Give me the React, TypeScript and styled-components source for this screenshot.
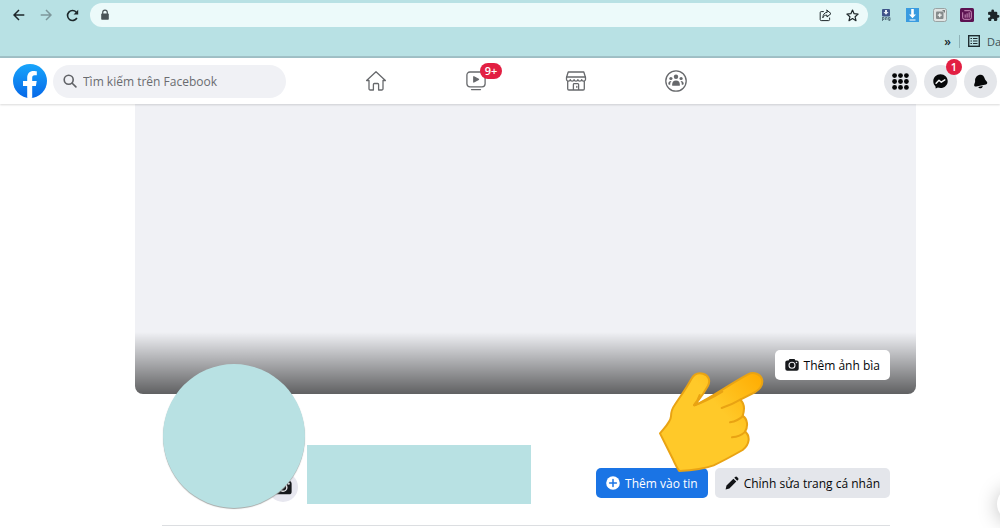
import React from "react";
import styled, { createGlobalStyle } from "styled-components";

const GlobalStyle = createGlobalStyle`
  *, *::before, *::after { box-sizing: border-box; }
  html, body { margin: 0; padding: 0; }
  body {
    background: #fff;
    color: #1b1d21;
    font-family: "Open Sans", "Noto Sans", sans-serif;
    font-size: 12px;
    overflow: hidden;
  }
  button { font: inherit; color: inherit; border: 0; padding: 0; background: none; cursor: pointer; }
  svg { display: block; flex: none; }
`;

const Page = styled.div`
  position: relative;
  min-height: 100vh;
  overflow: hidden;
`;

/* ---------- browser bar ---------- */

const BrowserBar = styled.div`
  background: #b8e1e4;
  border-bottom: 2px solid #a0c0c6;
  height: 58px;
`;

const AddressRow = styled.div`
  display: flex;
  align-items: center;
  padding: 3px 0 0 5px;
`;

const BarButton = styled.button<{ $dim?: boolean }>`
  width: 27px;
  height: 24px;
  flex: none;
  display: grid;
  place-items: center;
  color: ${(p) => (p.$dim ? "#7d979b" : "#1c2629")};
`;

const AddressBox = styled.div`
  flex: 1;
  min-width: 0;
  height: 24px;
  margin: 0 4px;
  padding: 0 2px 0 9px;
  display: flex;
  align-items: center;
  border-radius: 12px;
  background: #ecfafa;
  color: #4a5558;
`;

const AddressInput = styled.input`
  flex: 1;
  min-width: 0;
  border: 0;
  outline: 0;
  background: transparent;
  font: inherit;
`;

const Extensions = styled.div`
  display: flex;
  flex: none;
  width: 128px;
  overflow: hidden;
`;

const BookmarkRow = styled.div`
  display: flex;
  justify-content: flex-end;
  align-items: center;
  height: 28px;
  gap: 8px;
  color: #3f5155;
  font-size: 11px;
`;

const BarDivider = styled.span`
  width: 1px;
  height: 13px;
  background: #8fb3b8;
`;

const BookmarkFolder = styled.button`
  display: flex;
  align-items: center;
  gap: 7px;
  width: 32px;
  overflow: hidden;
  white-space: nowrap;
`;

const More = styled.button`
  color: #16252a;
  font-weight: 600;
  font-size: 12px;
`;

/* ---------- site header ---------- */

const Header = styled.header`
  position: relative;
  z-index: 1;
  display: grid;
  grid-template-columns: 326px minmax(0, 1fr) 274px;
  align-items: center;
  height: 46px;
  background: #fff;
  box-shadow: 0 1px 2px rgba(0, 0, 0, 0.15);
`;

const Brand = styled.div`
  display: flex;
  align-items: center;
  gap: 6px;
  padding: 0 40px 0 13px;
`;

const SearchBox = styled.label`
  flex: 1;
  min-width: 0;
  display: flex;
  align-items: center;
  gap: 6px;
  height: 33px;
  padding-left: 10px;
  border-radius: 17px;
  background: #f0f1f5;
  color: #606266;
`;

const SearchInput = styled.input`
  flex: 1;
  min-width: 0;
  border: 0;
  outline: 0;
  padding: 0;
  background: transparent;
  font: inherit;
  color: #606266;
  &::placeholder { color: #6a6c70; opacity: 1; }
`;

const Tabs = styled.nav`
  display: grid;
  grid-template-columns: repeat(4, 1fr);
`;

const Tab = styled.a`
  display: grid;
  place-items: center;
  height: 46px;
  color: #67696c;
`;

const Anchor = styled.span`
  position: relative;
  display: block;
`;

const Badge = styled.span<{ $wide?: boolean }>`
  position: absolute;
  top: ${(p) => (p.$wide ? "-7px" : "-6px")};
  right: ${(p) => (p.$wide ? "-16px" : "-5px")};
  width: ${(p) => (p.$wide ? "22px" : "16px")};
  height: 16px;
  border-radius: 8px;
  background: #e21f42;
  color: #fff;
  font-size: 11px;
  line-height: 16px;
  font-weight: 600;
  text-align: center;
`;

const Tools = styled.div`
  display: flex;
  justify-content: flex-end;
  gap: 7px;
  padding-right: 3px;
`;

const RoundButton = styled.button`
  position: relative;
  width: 33px;
  height: 33px;
  border-radius: 50%;
  display: grid;
  place-items: center;
  background: #e4e6ea;
  color: #060708;
`;

/* ---------- profile ---------- */

const Profile = styled.main`
  padding: 0 84px 0 135px;
`;

const Cover = styled.section`
  display: flex;
  align-items: flex-end;
  justify-content: flex-end;
  height: 290px;
  padding: 0 26px 14px;
  border-radius: 0 0 8px 8px;
  background: linear-gradient(to bottom, rgba(0, 0, 0, 0) 228px, rgba(0, 0, 0, 0.6) 290px), #f0f1f5;
`;

const ActionButton = styled.button<{ $tone: "white" | "blue" | "gray" }>`
  display: flex;
  align-items: center;
  justify-content: center;
  gap: 5px;
  height: 30px;
  padding: 0 10px;
  border-radius: 5px;
  font-weight: 500;
  white-space: nowrap;
  background: ${(p) => ({ white: "#fff", blue: "#1a74e5", gray: "#e4e6eb" })[p.$tone]};
  color: ${(p) => (p.$tone === "blue" ? "#fff" : "#050608")};
`;

const ProfileRow = styled.section`
  position: relative;
  display: flex;
  align-items: flex-end;
  height: 132px;
  margin: 0 26px 0 27px;
  border-bottom: 1px solid #dcdee1;
`;

const AvatarWrap = styled.div`
  position: relative;
  flex: none;
  margin: 0 2px 17px 1px;
`;

const Avatar = styled.div`
  position: relative;
  width: 142px;
  height: 144px;
  border-radius: 50%;
  background: #b8e1e3;
  box-shadow: 0 1px 1px #a5a9a8;
`;

const AvatarButton = styled.button`
  position: absolute;
  right: 7px;
  bottom: 6px;
  width: 30px;
  height: 30px;
  border-radius: 50%;
  display: grid;
  place-items: center;
  background: #e7e7ef;
`;

const NameBlock = styled.div`
  width: 224px;
  height: 59px;
  margin-bottom: 21px;
  background: #b8e1e3;
`;

const Actions = styled.div`
  display: flex;
  gap: 7px;
  margin: 0 0 27px auto;
`;

const Pointer = styled.svg`
  position: absolute;
  right: 125px;
  bottom: 52px;
  width: 107px;
  height: 102px;
  pointer-events: none;
`;

const ChatBubble = styled.button`
  position: absolute;
  right: -31px;
  top: 487px;
  width: 34px;
  height: 34px;
  border-radius: 50%;
  background: #fff;
  box-shadow: 0 2px 20px rgba(0, 0, 0, 0.25);
`;

/* ---------- drawings ---------- */

const line = { fill: "none", stroke: "currentColor", strokeLinecap: "round", strokeLinejoin: "round" } as const;

const ArrowIcon = ({ flip }: { flip?: boolean }) => (
  <svg width="12" height="12" viewBox="0 0 12 12" {...line} strokeWidth="1.5" strokeLinecap="butt" strokeLinejoin="miter">
    <path d={flip ? "M.7 6H11M6 1l5 5-5 5" : "M11.3 6H1M6 1L1 6l5 5"} />
  </svg>
);

const ReloadIcon = () => (
  <svg width="13" height="13" viewBox="0 0 13 13" {...line} strokeWidth="1.6" strokeLinecap="butt">
    <path d="M10.9 9A5 5 0 1 1 10.3 3.2" />
    <path d="M12.2.8v4.6H7.6z" fill="currentColor" stroke="none" />
  </svg>
);

const LockIcon = () => (
  <svg width="12" height="12" viewBox="0 0 12 12">
    <path d="M3.7 5V3.4a2.3 2.3 0 0 1 4.6 0V5" {...line} strokeWidth="1.2" />
    <rect x="2.2" y="4.6" width="7.6" height="6.2" rx=".8" fill="currentColor" />
  </svg>
);

const ShareIcon = () => (
  <svg width="13" height="13" viewBox="0 0 13 13" {...line} strokeWidth="1">
    <path d="M4.400 2.600H2.200a1 1 0 0 0-1 1v7a1 1 0 0 0 1 1h7.400a1 1 0 0 0 1-1V9" />
    <path d="M8 1.200l4 3.400-4 3.400V6.100C5.800 6.100 4.600 7 3.800 8.800 4 5.500 5.500 3.500 8 3.200z" />
  </svg>
);

const StarIcon = () => (
  <svg width="13" height="13" viewBox="0 0 13 13" {...line} strokeWidth="1.2">
    <path d="M6.5 1l1.6 3.7 4 .4-3 2.7.9 3.9-3.5-2.1L3 11.7l.9-3.9-3-2.7 4-.4z" />
  </svg>
);

const PngIcon = () => (
  <svg width="12" height="14" viewBox="0 0 12 14">
    <rect x="2" y="1" width="8" height="7.5" rx="1" fill="#3f548a" />
    <path d="M5 2h2v2h1.500L6 6.800 3.500 4H5z" fill="#e8eef8" />
    <path d="M2.500 9v4M2.500 9.500H4v2H2.500M5.500 12V9.500H7V12M8.500 9.500H10v3H8.500M8.500 9.500v2H10" fill="none" stroke="#54707c" strokeWidth=".9" />
  </svg>
);

const DownloadIcon = () => (
  <svg width="13" height="14" viewBox="0 0 13 14">
    <rect width="13" height="14" fill="#3a9be0" />
    <path d="M5.2 1h2.6v5.5H10L6.5 10.2 3 6.500h2.200zM3.500 11.500h6v1h-6z" fill="#fff" />
  </svg>
);

const CaptureIcon = () => (
  <svg width="14" height="14" viewBox="0 0 14 14">
    <rect x=".5" y=".5" width="13" height="13" rx="2" fill="#dfe3e2" stroke="#9aa3a3" />
    <rect x="3" y="3.500" width="7.500" height="7.500" rx="1" fill="#858b8b" />
    <path d="M6.750 5.200v4M4.750 7.200h4" stroke="#f3f5f4" strokeWidth="1.300" />
    <path d="M9 2h3v3z" fill="#777d7d" />
  </svg>
);

const ChartIcon = () => (
  <svg width="14" height="14" viewBox="0 0 13 13">
    <rect width="13" height="13" rx="1.500" fill="#5c1251" />
    <path d="M4 2.500h5a1.500 1.500 0 0 1 1.500 1.500v5A1.500 1.500 0 0 1 9 10.500H4A1.500 1.500 0 0 1 2.500 9V4M4.800 9V6M6.600 9V5M8.500 9V4" fill="none" stroke="#dfa6d0" strokeWidth=".8" />
  </svg>
);

const PuzzleIcon = () => (
  <svg width="13" height="13" viewBox="0 0 24 24" fill="currentColor">
    <path d="M20.500 11H19V7a2 2 0 0 0-2-2h-4V3.500a2.500 2.500 0 0 0-5 0V5H4a2 2 0 0 0-2 2v3.800h1.500a2.700 2.700 0 0 1 0 5.400H2V20a2 2 0 0 0 2 2h3.800v-1.500a2.700 2.700 0 0 1 5.400 0V22H17a2 2 0 0 0 2-2v-4h1.500a2.500 2.500 0 0 0 0-5z" />
  </svg>
);

const ListIcon = () => (
  <svg width="12" height="12" viewBox="0 0 12 12" fill="none" stroke="#1e2d31">
    <rect x=".7" y=".7" width="10.600" height="10.600" strokeWidth="1.400" />
    <path d="M2.500 3.500H4M5 3.500h4.500M2.500 6H4M5 6h4.500M2.500 8.500H4M5 8.500h4.500" />
  </svg>
);

const FacebookLogo = () => (
  <svg width="34" height="34" viewBox="0 0 34 34" role="img" aria-label="Facebook">
    <defs>
      <linearGradient id="brand" x1="0" y1="0" x2="0" y2="1">
        <stop offset="0" stopColor="#18a5fb" />
        <stop offset="1" stopColor="#0668e8" />
      </linearGradient>
    </defs>
    <circle cx="17" cy="17" r="17" fill="url(#brand)" />
    <path d="M14.200 33.800V21.900H10v-4.800h4.200v-3.300c0-4.500 2.400-6.900 6.400-6.900 1.600 0 3.200.3 3.200.3v4.100h-2.100c-2 0-2.500 1.200-2.500 2.500v3.300h4.500l-.8 4.800h-3.700v11.900a17 17 0 0 1-5 0z" fill="#fff" />
  </svg>
);

const SearchIcon = () => (
  <svg width="14" height="14" viewBox="0 0 14 14" {...line} strokeWidth="1.600">
    <circle cx="5.700" cy="5.700" r="4.500" />
    <path d="M9.200 9.200l3.700 3.700" />
  </svg>
);

const HomeIcon = () => (
  <svg width="22" height="22" viewBox="0 0 22 22" {...line} strokeWidth="1.300">
    <path d="M4 10.500H1.600L11 1.800l9.400 8.700H18v8.300a1.200 1.200 0 0 1-1.200 1.200h-3.200v-5.500a1 1 0 0 0-1-1H9.400a1 1 0 0 0-1 1V20H5.200A1.200 1.200 0 0 1 4 18.800z" />
  </svg>
);

const WatchIcon = () => (
  <svg width="20" height="22" viewBox="0 0 20 22" {...line} strokeWidth="1.300">
    <rect x=".9" y="2" width="18.200" height="14.800" rx="3" />
    <path d="M5.500 19.600h9" />
    <path d="M7.800 6.800v5.200l4.700-2.600z" fill="currentColor" />
  </svg>
);

const MarketIcon = () => (
  <svg width="22" height="22" viewBox="0 0 22 22" {...line} strokeWidth="1.300">
    <path d="M3.200 2h15.600l1.700 5.500v2c0 2-3.500 2.200-3.800.2-.3 2-3.500 2-3.800 0-.3 2-3.500 2-3.800 0-.3 2-3.500 2-3.800 0-.3 2-3.800 1.800-3.800-.2v-2z" />
    <path d="M1.700 7h18.600M2.700 11.500v7.300A1.200 1.200 0 0 0 3.900 20h14.200a1.200 1.200 0 0 0 1.200-1.200v-7.300M8.400 20v-5.500a.8.800 0 0 1 .8-.8h3.600a.8.800 0 0 1 .8.800V20M11.800 16.500v.8" />
  </svg>
);

const GroupsIcon = () => (
  <svg width="22" height="22" viewBox="0 0 22 22">
    <circle cx="11" cy="11" r="10.200" fill="none" stroke="currentColor" strokeWidth="1.300" />
    <g fill="currentColor">
      <circle cx="11" cy="6.800" r="2.200" />
      <circle cx="5.900" cy="8.500" r="1.600" />
      <circle cx="16.100" cy="8.500" r="1.600" />
      <path d="M7.200 15.800v-1.500a3.800 3.800 0 0 1 7.600 0v1.500z" />
      <path d="M3.300 13.700c0-1.800 1.300-3 3.200-2.800-.9.800-1.300 1.900-1.300 3.900H3.800zM18.700 13.700c0-1.800-1.300-3-3.200-2.800.9.800 1.300 1.900 1.300 3.900h1.400z" />
    </g>
  </svg>
);

const GridIcon = () => (
  <svg width="17" height="17" viewBox="0 0 17 17" fill="currentColor">
    {[2.6, 8.5, 14.4].map((y) =>
      [2.6, 8.5, 14.4].map((x) => <circle key={`${x}-${y}`} cx={x} cy={y} r="2.400" />)
    )}
  </svg>
);

const MessengerIcon = () => (
  <svg width="15" height="15" viewBox="0 0 15 15">
    <path d="M7.500.3C3.400.3.3 3.300.3 7.300c0 2.100.8 3.900 2.200 5.100l.2 2.200 2.200-1c.8.300 1.700.4 2.600.4 4.100 0 7.200-2.900 7.200-6.800S11.600.3 7.500.3z" fill="currentColor" />
    <path d="M3.100 9.200l2.900-3 2.300 2 3.500-2.300" {...line} stroke="#f2f3f5" strokeWidth="1.500" />
  </svg>
);

const BellIcon = () => (
  <svg width="15" height="15" viewBox="0 0 15 15" fill="currentColor">
    <path d="M6.900.8C9.400.4 11 2 11.600 4.300c.4 1.700 1.200 2.200 2.100 3.200 1 1.100.6 2.500-.8 2.900L3.300 12.500c-1.500.3-2.600-.9-2-2.300.5-1.300.9-2 .8-3.500C2 3.900 4 1.300 6.900.8zM5.200 13l4.500-.9c0 1.200-.7 2-1.800 2.200-1.200.2-2.200-.3-2.700-1.300z" />
  </svg>
);

const CameraIcon = ({ size = 14 }: { size?: number }) => (
  <svg width={size} height={size} viewBox="0 0 14 14">
    <path d="M4.500 1h5l1 1.400h1.300A1.900 1.900 0 0 1 13.700 4.300v6.400a2 2 0 0 1-2 2H2.300a2 2 0 0 1-2-2V4.300a1.900 1.900 0 0 1 1.900-1.900h1.300z" fill="#16181b" />
    <circle cx="7" cy="7.300" r="3" fill="none" stroke="#e9e9ec" strokeWidth="1.100" />
    <circle cx="11.500" cy="4.500" r=".8" fill="#e9e9ec" />
  </svg>
);

const PlusIcon = () => (
  <svg width="14" height="14" viewBox="0 0 14 14">
    <circle cx="7" cy="7" r="6.800" fill="#fff" />
    <path d="M7 3.600v6.800M3.600 7h6.800" stroke="#1a74e5" strokeWidth="1.500" strokeLinecap="round" />
  </svg>
);

const PencilIcon = () => (
  <svg width="14" height="14" viewBox="0 0 14 14" fill="#111316">
    <path d="M.6 13.400l.9-3.800 6.900-6.900 2.900 2.900-6.900 6.900zM9.300 1.800l.8-.8a1.400 1.400 0 0 1 2 0l.9.900a1.400 1.400 0 0 1 0 2l-.8.800z" />
  </svg>
);

const PointingHand = () => (
  <Pointer viewBox="55 95 321 306" aria-hidden="true">
    <defs>
      <linearGradient id="skin" x1="0.300" y1="0.600" x2="1" y2="0">
        <stop offset="0.400" stopColor="#ffc929" />
        <stop offset="1" stopColor="#ffab00" />
      </linearGradient>
    </defs>
    <path
      d="M61 282C76 263 93 248 94 231C94 218 97 208 105 197C122 171 139 149 155 119C162 106 175 99 190 103C207 108 213 123 205 139L190 164L165 198C215 175 270 134 325 105C343 96 362 105 367 119C371 136 361 149 347 158L302 181C312 190 317 205 309 230C324 238 326 262 316 277C333 290 330 316 309 332C279 349 246 367 222 378C189 390 155 393 119 395C111 386 105 372 98 356Z"
      fill="url(#skin)"
      stroke="#e9a313"
      strokeWidth="6"
      strokeLinejoin="round"
    />
    <g fill="none" stroke="#e9a313" strokeWidth="6" strokeLinecap="round">
      <path d="M164 198C188 190 225 171 248 157" />
      <path d="M163 197C175 183 176 180 180 167" />
      <path d="M246 206C268 199 287 190 302 181" />
      <path d="M271 249C288 246 301 239 310 230" />
      <path d="M277 294C294 293 307 287 317 277" />
    </g>
  </Pointer>
);

export default function App() {
  return (
    <Page>
      <GlobalStyle />
      <BrowserBar>
        <AddressRow>
          <BarButton aria-label="Back"><ArrowIcon /></BarButton>
          <BarButton aria-label="Forward" $dim><ArrowIcon flip /></BarButton>
          <BarButton aria-label="Reload"><ReloadIcon /></BarButton>
          <AddressBox>
            <LockIcon />
            <AddressInput aria-label="Address" />
            <BarButton aria-label="Share"><ShareIcon /></BarButton>
            <BarButton aria-label="Bookmark"><StarIcon /></BarButton>
          </AddressBox>
          <Extensions>
            <BarButton aria-label="PNG"><PngIcon /></BarButton>
            <BarButton aria-label="Download"><DownloadIcon /></BarButton>
            <BarButton aria-label="Capture"><CaptureIcon /></BarButton>
            <BarButton aria-label="Analytics"><ChartIcon /></BarButton>
            <BarButton aria-label="Extensions"><PuzzleIcon /></BarButton>
          </Extensions>
        </AddressRow>
        <BookmarkRow>
          <More aria-label="More bookmarks">»</More>
          <BarDivider />
          <BookmarkFolder><ListIcon />Da</BookmarkFolder>
        </BookmarkRow>
      </BrowserBar>

      <Header>
        <Brand>
          <FacebookLogo />
          <SearchBox>
            <SearchIcon />
            <SearchInput type="search" placeholder="Tìm kiếm trên Facebook" aria-label="Tìm kiếm trên Facebook" />
          </SearchBox>
        </Brand>
        <Tabs>
          <Tab href="#home" aria-label="Home"><HomeIcon /></Tab>
          <Tab href="#watch" aria-label="Watch">
            <Anchor><WatchIcon /><Badge $wide>9+</Badge></Anchor>
          </Tab>
          <Tab href="#marketplace" aria-label="Marketplace"><MarketIcon /></Tab>
          <Tab href="#groups" aria-label="Groups"><GroupsIcon /></Tab>
        </Tabs>
        <Tools>
          <RoundButton aria-label="Menu"><GridIcon /></RoundButton>
          <RoundButton aria-label="Messenger"><MessengerIcon /><Badge>1</Badge></RoundButton>
          <RoundButton aria-label="Notifications"><BellIcon /></RoundButton>
        </Tools>
      </Header>

      <Profile>
        <Cover>
          <ActionButton $tone="white"><CameraIcon />Thêm ảnh bìa</ActionButton>
        </Cover>
        <ProfileRow>
          <AvatarWrap>
            <AvatarButton aria-label="Camera"><CameraIcon size={18} /></AvatarButton>
            <Avatar />
          </AvatarWrap>
          <NameBlock />
          <Actions>
            <ActionButton $tone="blue"><PlusIcon />Thêm vào tin</ActionButton>
            <ActionButton $tone="gray"><PencilIcon />Chỉnh sửa trang cá nhân</ActionButton>
          </Actions>
          <PointingHand />
        </ProfileRow>
      </Profile>
      <ChatBubble aria-label="Chat" />
    </Page>
  );
}
